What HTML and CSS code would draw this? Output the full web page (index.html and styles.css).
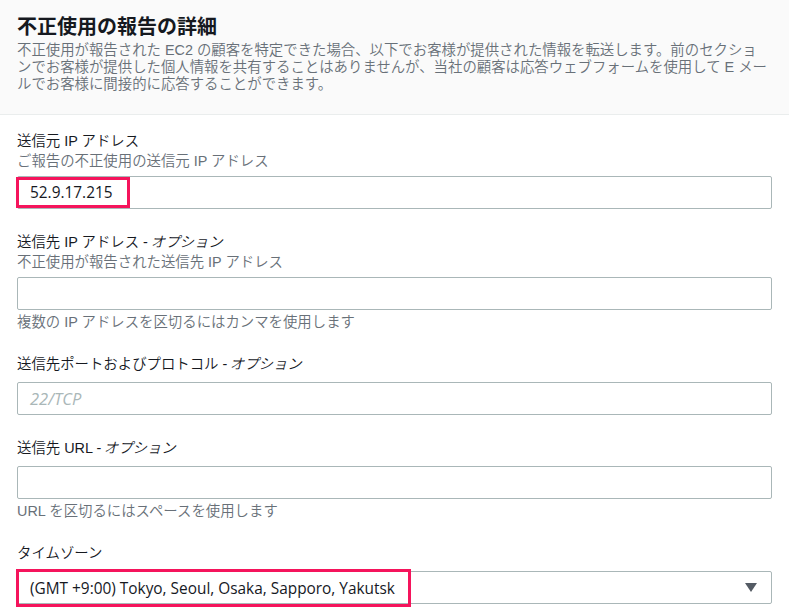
FILE: index.html
```html
<!DOCTYPE html>
<html lang="ja">
<head>
    <meta charset="UTF-8">
    <meta name="viewport" content="width=device-width, initial-scale=1.0">
    <title>不正使用の報告の詳細</title>
    <link rel="stylesheet" href="styles.css">
</head>
<body>

<div class="report-header">
    <h2>不正使用の報告の詳細</h2>
    <p class="report-desc">
        不正使用が報告された EC2 の顧客を特定できた場合、以下でお客様が提供された情報を転送します。前のセクショ<br>ンでお客様が提供した個人情報を共有することはありませんが、当社の顧客は応答ウェブフォームを使用して E メー<br>ルでお客様に間接的に応答することができます。
    </p>
</div>

<div class="report-form">

    <div class="field">
        <div class="field-label">送信元 IP アドレス</div>
        <div class="field-desc">ご報告の不正使用の送信元 IP アドレス</div>
        <div class="field-input">
            <span class="mark">52.9.17.215</span>
        </div>
    </div>

    <div class="field">
        <div class="field-label">送信先 IP アドレス - <i class="optional">オプション</i></div>
        <div class="field-desc">不正使用が報告された送信先 IP アドレス</div>
        <div class="field-input"></div>
        <div class="field-hint">複数の IP アドレスを区切るにはカンマを使用します</div>
    </div>

    <div class="field">
        <div class="field-label">送信先ポートおよびプロトコル - <i class="optional">オプション</i></div>
        <div class="field-input">
            <span class="placeholder">22/TCP</span>
        </div>
    </div>

    <div class="field">
        <div class="field-label">送信先 URL - <i class="optional">オプション</i></div>
        <div class="field-input"></div>
        <div class="field-hint">URL を区切るにはスペースを使用します</div>
    </div>

    <div class="field">
        <div class="field-label">タイムゾーン</div>
        <div class="field-input field-select">
            <span class="mark mark-wide">(GMT +9:00) Tokyo, Seoul, Osaka, Sapporo, Yakutsk</span>
            <span class="caret"></span>
        </div>
    </div>

</div>

</body>
</html>
```

FILE: styles.css
```css
body {
    margin: 0;
    padding: 0;
    background-color: #ffffff;
    font-family: "Liberation Sans", "Noto Sans CJK JP", sans-serif;
    font-size: 14.4px;
    font-weight: 350;
    color: #16191f;
}

.report-header {
    background-color: #fafafa;
    border-bottom: 1px solid #eaeded;
    padding: 14px 17px 21px;
}

.report-header h2 {
    margin: 0 0 2px;
    font-size: 20px;
    line-height: 26px;
    font-weight: bold;
}

.report-desc {
    margin: 0;
    line-height: 17px;
    color: #687078;
}

.report-form {
    padding: 16px 17px 0;
}

.field {
    margin-bottom: 23px;
}

.field-label {
    line-height: 20px;
}

/* CJK fonts have no italic face, so lean it by hand */
.optional {
    display: inline-block;
    font-style: normal;
    transform: skewX(-14deg);
}

.field-desc {
    line-height: 20px;
    color: #687078;
}

.field-input {
    display: flex;
    align-items: center;
    box-sizing: border-box;
    height: 33px;
    margin-top: 5px;
    border: 1px solid #aab7b8;
    border-radius: 2px;
    background-color: #ffffff;
    font-family: "Open Sans", "Noto Sans CJK JP", sans-serif;
    font-size: 15.4px;
    font-weight: 400;
}

.field-label + .field-input {
    margin-top: 8px;
}

.field-hint {
    margin-top: 3px;
    line-height: 18px;
    color: #687078;
}

.placeholder {
    padding-left: 12px;
    color: #aab7b8;
    font-style: italic;
    font-size: 16.5px;
}

/* red highlight boxes drawn on the screenshot */
.mark {
    display: flex;
    align-items: center;
    align-self: stretch;
    margin: 0 0 0 -2px;
    padding: 0 14px 0 11px;
    border: 3px solid #f5145c;
}

.mark-wide {
    margin: -3px 0 -4px -2px;
    padding: 0 13px 0 11px;
}

.field-select {
    justify-content: space-between;
}

.caret {
    width: 0;
    height: 0;
    margin-right: 14px;
    border-left: 6px solid transparent;
    border-right: 6px solid transparent;
    border-top: 9px solid #545b64;
}
```
